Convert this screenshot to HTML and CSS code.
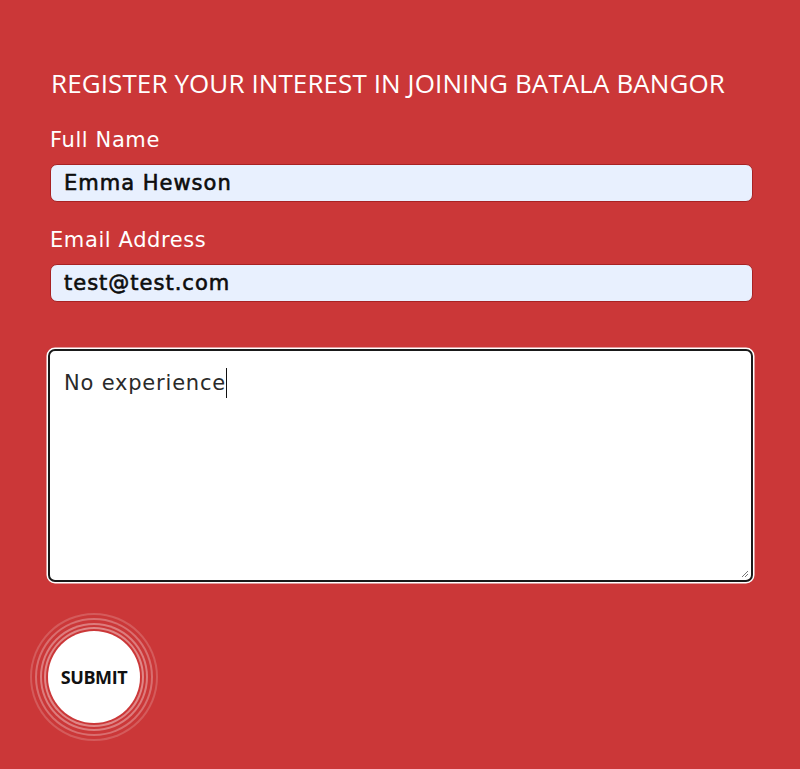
FILE: index.html
```html
<!DOCTYPE html>
<html>
<head>
<meta charset="utf-8">
<link rel="stylesheet" href="styles.css">
</head>
<body>
<form class="form">
  <h2 class="title">REGISTER YOUR INTEREST IN JOINING BATALA BANGOR</h2>
  <label class="label label-first">Full Name</label>
  <div class="input">Emma Hewson</div>
  <label class="label">Email Address</label>
  <div class="input">test@test.com</div>
  <div class="textarea"><span class="typed">No experience</span><span class="caret"></span>
    <svg class="grip" width="10" height="10" viewBox="0 0 10 10"><path d="M9 3 L3 9 M9 6 L6 9" stroke="#777" stroke-width="1"/></svg>
  </div>
  <div class="submit-wrap">
    <div class="submit">SUBMIT</div>
  </div>
</form>
</body>
</html>
```
FILE: styles.css
```css
html, body {
  margin: 0;
  padding: 0;
  background: #cb3738;
  height: 100%;
}
.form {
  display: flex;
  flex-direction: column;
  padding: 66px 47px 0 48px;
  font-family: "DejaVu Sans", sans-serif;
}
.title {
  margin: 0 0 0 3px;
  font-family: "Open Sans", sans-serif;
  font-weight: 400;
  font-size: 26px;
  line-height: 34px;
  color: #fff;
  letter-spacing: 0.1px;
}
.label {
  margin: 24px 0 0 2px;
  color: #fff;
  font-size: 21px;
  line-height: 28px;
  font-weight: 400;
  letter-spacing: 0.6px;
}
.label-first {
  margin-top: 26px;
}
.input {
  margin: 10px 0 0 2px;
  height: 38px;
  box-sizing: border-box;
  background: #e8f0fe;
  border: 1px solid #a82223;
  border-radius: 7px;
  padding: 0 13px;
  display: flex;
  align-items: center;
  font-size: 21px;
  font-weight: 500;
  letter-spacing: 1px;
  color: #0d0d0d;
  -webkit-text-stroke: 0.6px #0d0d0d;
}
.textarea {
  position: relative;
  margin-top: 47px;
  height: 233px;
  box-sizing: border-box;
  background: #fff;
  border: 2px solid #1a1a1a;
  border-radius: 7px;
  box-shadow: 0 0 0 1.5px #fff;
  padding: 17px 14px;
  font-size: 21px;
  font-weight: 400;
  letter-spacing: 0.8px;
  color: #2a2a2a;
  display: flex;
  align-items: flex-start;
}
.caret {
  display: inline-block;
  width: 1px;
  height: 30px;
  background: #111;
}
.typed { line-height: 30px; }
.grip {
  position: absolute;
  right: 2px;
  bottom: 2px;
}
.submit-wrap {
  margin-top: 49px;
  margin-left: 0px;
  width: 92px;
  height: 92px;
}
.submit {
  width: 92px;
  height: 92px;
  border-radius: 50%;
  background: #fff;
  display: flex;
  align-items: center;
  justify-content: center;
  font-family: "Open Sans", sans-serif;
  font-weight: 700;
  font-size: 18px;
  color: #111;
  letter-spacing: -0.4px;
  box-shadow:
    0 0 0 2px #cb3738,
    0 0 0 4px rgba(255,255,255,0.4),
    0 0 0 6px #cb3738,
    0 0 0 8px rgba(255,255,255,0.35),
    0 0 0 11px #cb3738,
    0 0 0 13px rgba(255,255,255,0.28),
    0 0 0 16px #cb3738,
    0 0 0 18px rgba(255,255,255,0.18);
}
```
